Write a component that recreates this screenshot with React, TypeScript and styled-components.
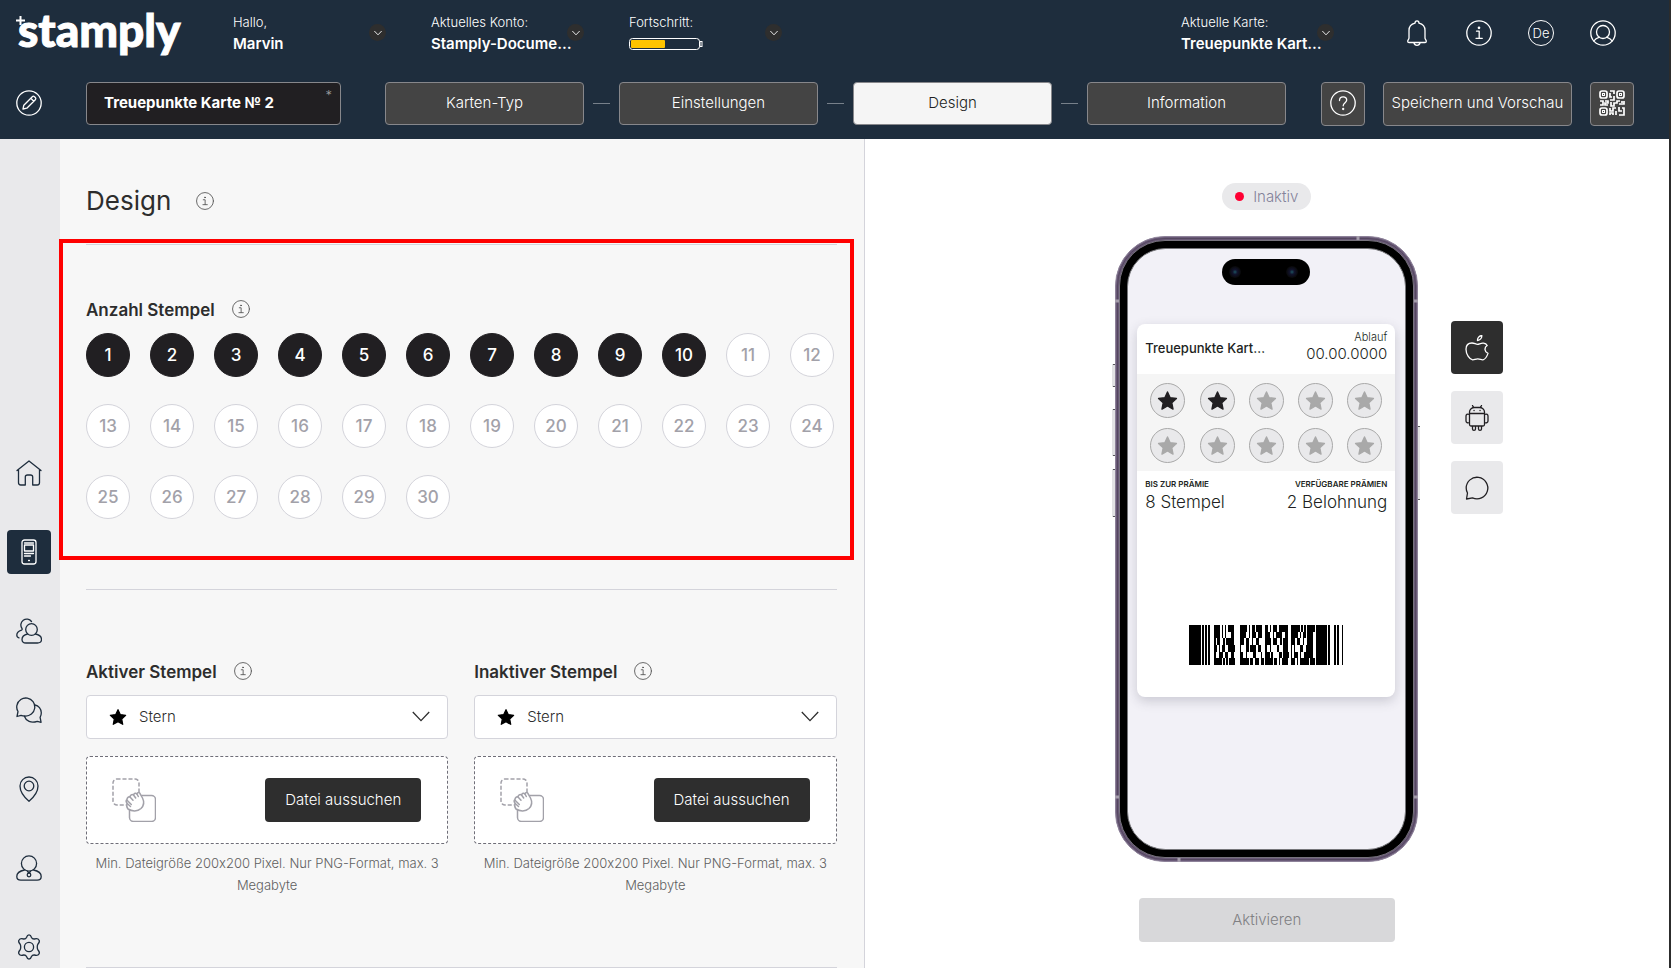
import React from "react";
import styled, { createGlobalStyle, css } from "styled-components";

const color = {
  navy: "#1e2d3d",
  ink: "#211f22",
  text: "#2d2d2d",
  button: "#444444",
  buttonBorder: "#87878b",
  panel: "#f7f7f7",
  rail: "#e9e9eb",
  line: "#d4d4db",
  muted: "#a2a1a9",
};

const GlobalStyle = createGlobalStyle`
  *, *::before, *::after { box-sizing: border-box; }
  body {
    margin: 0;
    background: #ffffff;
    color: ${color.text};
    font-family: Inter, "Liberation Sans", sans-serif;
    font-size: 15px;
    font-weight: 300;
    font-feature-settings: "calt" 0;
  }
  button, input, select { font: inherit; color: inherit; font-feature-settings: inherit; }
  button { padding: 0; border: 0; background: none; cursor: pointer; }
  h1, h2, p { margin: 0; }
  svg { display: block; flex: none; }
`;

const Page = styled.div`
  display: flex;
  flex-direction: column;
  height: 100vh;
  overflow: hidden;
  border-right: 2px solid #2c2c2c;
`;

/* ---------- header ---------- */

const Header = styled.header`
  flex: none;
  background: ${color.navy};
  color: #ffffff;
`;

const TopRow = styled.div`
  display: flex;
  align-items: center;
  height: 66px;
  padding: 0 53px 0 16px;
`;

const Logo = styled.a`
  position: relative;
  width: 217px;
  padding: 0 0 6px 2px;
  color: #ffffff;
  font-family: Lato, sans-serif;
  font-size: 46px;
  font-weight: 900;
  line-height: 60px;
  text-decoration: none;
  -webkit-text-stroke: 1px #ffffff;
`;

const LogoSpark = styled.svg`
  position: absolute;
  left: 0;
  top: 16px;
`;

const Accounts = styled.div`
  display: flex;
  flex: 1;
  gap: 45px;
`;

const AccountButton = styled.button<{ $last?: boolean }>`
  position: relative;
  width: 153px;
  text-align: left;
  line-height: 22px;
  ${(p) => p.$last && css`margin-left: auto;`}
`;

const AccountLabel = styled.span`
  display: block;
  font-size: 13px;
`;

const AccountName = styled.span`
  display: flex;
  align-items: center;
  height: 22px;
  font-size: 15px;
  font-weight: 600;
  white-space: nowrap;
`;

const ChevronDot = styled.span`
  position: absolute;
  right: 0;
  top: 13px;
  display: grid;
  place-items: center;
  width: 17px;
  height: 17px;
  border-radius: 50%;
  background: #2e2e2e;
`;

const Tools = styled.div`
  display: flex;
  gap: 36px;
  margin-left: 70px;
`;

const IconButton = styled.button`
  display: grid;
  place-items: center;
  width: 26px;
  height: 26px;
`;

const Language = styled(IconButton)`
  border: 1px solid #ffffff;
  border-radius: 50%;
  font-size: 13px;
`;

const StepRow = styled.div`
  display: flex;
  align-items: flex-start;
  padding: 16px 35px 13px 16px;
`;

const EditButton = styled(IconButton)`
  margin-top: 8px;
`;

const NameField = styled.label`
  position: relative;
  width: 255px;
  margin: 0 44px;
`;

const NameInput = styled.input`
  display: block;
  width: 100%;
  height: 43px;
  padding: 0 17px 2px;
  border: 1px solid ${color.buttonBorder};
  border-radius: 4px;
  background: ${color.ink};
  font-weight: 700;
`;

const Required = styled.span`
  position: absolute;
  right: 9px;
  top: 5px;
  color: #a0a0a0;
  font-size: 13px;
`;

const Steps = styled.nav`
  display: flex;
  flex: 1;
  align-items: center;
  gap: 9px;
`;

const Separator = styled.span`
  width: 17px;
  height: 1px;
  background: #77808a;
`;

const BarButton = styled.button<{ $active?: boolean; $width?: number }>`
  display: flex;
  align-items: center;
  justify-content: center;
  ${(p) =>
    p.$width
      ? css`width: ${p.$width}px; height: 44px; padding-bottom: 3px;`
      : css`flex: 1; height: 43px; padding-bottom: 2px;`}
  border: 1px solid ${color.buttonBorder};
  border-radius: 4px;
  background: ${(p) => (p.$active ? "#f5f5f5" : color.button)};
  color: ${(p) => (p.$active ? color.ink : "#ffffff")};
  white-space: nowrap;
`;

const BarActions = styled.div`
  display: flex;
  gap: 18px;
  margin-left: 35px;
`;

/* ---------- body ---------- */

const Body = styled.div`
  display: grid;
  flex: 1;
  grid-template-columns: 60px minmax(0, 1fr) minmax(0, 1fr);
  grid-template-rows: minmax(0, 1fr);
  min-height: 0;
`;

const Rail = styled.nav`
  display: flex;
  flex-direction: column;
  gap: 35px;
  padding: 312px 0 0 7px;
  background: ${color.rail};
`;

const RailLink = styled.a<{ $active?: boolean }>`
  display: grid;
  flex: none;
  place-items: center;
  width: 44px;
  height: 44px;
  border-radius: 4px;
  color: ${(p) => (p.$active ? "#ffffff" : color.navy)};
  ${(p) => p.$active && css`background: ${color.navy};`}
`;

const Editor = styled.main`
  position: relative;
  padding: 0 27px 0 26px;
  border-right: 1px solid ${color.line};
  background: ${color.panel};
`;

const TitleRow = styled.div`
  display: flex;
  align-items: center;
  gap: 25px;
  height: 105px;
  padding-top: 18px;
`;

const Title = styled.h1`
  font-size: 26px;
  font-weight: 400;
  line-height: 36px;
`;

const Section = styled.section`
  border-top: 1px solid ${color.line};
`;

const StampSection = styled(Section)`
  height: 345px;
  padding-top: 50px;
`;

const UploadSection = styled(Section)`
  display: grid;
  grid-template-columns: 1fr 1fr;
  gap: 26px;
  height: 378px;
  padding-top: 67px;
`;

const Highlight = styled.div`
  position: absolute;
  left: -1px;
  right: 10px;
  top: 100px;
  height: 321px;
  border: 4px solid #ff0000;
  pointer-events: none;
`;

const HeadingRow = styled.div`
  display: flex;
  align-items: center;
  gap: 17px;
  height: 28px;
`;

const Heading = styled.h2`
  padding-top: 2px;
  font-size: 17px;
  font-weight: 600;
  line-height: 26px;
`;

const InfoButton = styled.button`
  width: 18px;
  height: 18px;
  color: #5a5a5a;
`;

const CountGrid = styled.div`
  display: flex;
  flex-wrap: wrap;
  gap: 27px 20px;
  margin-top: 10px;
`;

const Count = styled.button<{ $on: boolean }>`
  width: 44px;
  height: 44px;
  border: 1px solid ${(p) => (p.$on ? color.ink : color.line)};
  border-radius: 50%;
  background: ${(p) => (p.$on ? color.ink : "#ffffff")};
  color: ${(p) => (p.$on ? "#ffffff" : color.muted)};
  font-size: 17px;
  font-weight: 500;
`;

const SelectBox = styled.div`
  position: relative;
  margin-top: 10px;
`;

const Select = styled.select`
  appearance: none;
  width: 100%;
  height: 44px;
  padding: 0 52px 2px;
  border: 1px solid ${color.line};
  border-radius: 4px;
  background: #ffffff;
`;

const SelectStar = styled.span`
  position: absolute;
  left: 23px;
  top: 13px;
  color: #000000;
  pointer-events: none;
`;

const SelectChevron = styled.span`
  position: absolute;
  right: 18px;
  top: 16px;
  pointer-events: none;
`;

const DropZone = styled.div`
  display: flex;
  align-items: center;
  justify-content: space-between;
  height: 88px;
  margin-top: 17px;
  padding: 0 26px 0 25px;
  border: 1px dashed #6f6e78;
  border-radius: 4px;
  background: #ffffff;
`;

const FileButton = styled.button`
  width: 156px;
  height: 44px;
  padding-bottom: 2px;
  border-radius: 4px;
  background: #2e2e2e;
  color: #ffffff;
`;

const Hint = styled.p`
  margin-top: 8px;
  color: #5f5f5f;
  font-size: 13px;
  line-height: 22px;
  text-align: center;
`;

/* ---------- preview ---------- */

const Preview = styled.aside`
  display: flex;
  flex-direction: column;
  align-items: center;
  padding-top: 44px;
`;

const Status = styled.div`
  display: flex;
  align-items: center;
  gap: 9px;
  height: 27px;
  padding: 0 13px;
  border-radius: 14px;
  background: ${color.rail};
  color: #83829a;
`;

const StatusDot = styled.span`
  width: 9px;
  height: 9px;
  border-radius: 50%;
  background: #ff0033;
`;

const Stage = styled.div`
  display: grid;
  grid-template-columns: 1fr auto 1fr;
  width: 100%;
  margin-top: 26px;
`;

const Phone = styled.div`
  position: relative;
  grid-column: 2;
  width: 303px;
  height: 626px;
  padding: 88px 23px 0 22px;
`;

const PhoneDrawing = styled.svg`
  position: absolute;
  left: -4px;
  top: 0;
`;

const Card = styled.article`
  position: relative;
  display: flex;
  flex-direction: column;
  height: 373px;
  border-radius: 8px;
  background: #ffffff;
  color: ${color.ink};
  box-shadow: 0 4px 12px rgba(60, 60, 80, 0.22);
`;

const CardHead = styled.div`
  display: flex;
  align-items: center;
  justify-content: space-between;
  height: 50px;
  padding: 0 8px 2px;
  font-size: 13px;
  font-weight: 500;
`;

const Expiry = styled.div`
  padding-bottom: 4px;
  font-size: 15px;
  font-weight: 300;
  line-height: 18px;
  text-align: right;
`;

const ExpiryLabel = styled.div`
  font-size: 11px;
  line-height: 16px;
`;

const StampBand = styled.div`
  display: grid;
  grid-template-columns: repeat(5, 35px);
  justify-content: space-between;
  gap: 10px 0;
  height: 97px;
  padding: 9px 13px;
  background: #f5f5f5;
`;

const Stamp = styled.span<{ $on: boolean }>`
  display: grid;
  place-items: center;
  width: 35px;
  height: 35px;
  border: 1px solid #a9a9a9;
  border-radius: 50%;
  background: ${color.rail};
  color: ${(p) => (p.$on ? color.ink : "#a9a9a9")};
`;

const Totals = styled.div`
  display: flex;
  justify-content: space-between;
  padding: 6px 8px;
`;

const Total = styled.div<{ $end?: boolean }>`
  font-size: 17px;
  line-height: 22px;
  text-align: ${(p) => (p.$end ? "right" : "left")};
`;

const TotalLabel = styled.div`
  font-size: 8px;
  font-weight: 600;
  line-height: 14px;
  text-transform: uppercase;
`;

const BarcodeBox = styled.div`
  display: flex;
  justify-content: center;
  margin-top: auto;
  padding-bottom: 32px;
`;

const Platforms = styled.div`
  display: flex;
  flex-direction: column;
  gap: 17px;
  padding: 85px 0 0 33px;
`;

const Platform = styled.button<{ $active?: boolean }>`
  display: grid;
  place-items: center;
  width: 52px;
  height: 53px;
  border-radius: 4px;
  background: ${(p) => (p.$active ? "#2e2e2e" : color.rail)};
  color: ${(p) => (p.$active ? "#ffffff" : color.ink)};
`;

const Activate = styled.button`
  width: 256px;
  height: 44px;
  margin-top: 36px;
  padding-bottom: 2px;
  border-radius: 4px;
  background: #d8d8da;
  color: #808083;
`;

/* ---------- icons ---------- */

type IconProps = { size?: number; stroke?: number; children: React.ReactNode };

const Icon = ({ size = 26, stroke = 1.3, children }: IconProps) => (
  <svg
    width={size}
    height={size}
    viewBox="0 0 26 26"
    fill="none"
    stroke="currentColor"
    strokeWidth={stroke}
    strokeLinecap="round"
    strokeLinejoin="round"
    aria-hidden="true"
  >
    {children}
  </svg>
);

const InfoGlyph = ({ size, stroke }: { size?: number; stroke?: number }) => (
  <Icon size={size} stroke={stroke}>
    <circle cx="13" cy="13" r="12.2" />
    <path d="M10.5 11.2h2.7v7M10 18.3h6.3" />
    <circle cx="13" cy="7.8" r=".7" fill="currentColor" />
  </Icon>
);

const Star = ({ size }: { size: number }) => (
  <svg width={size} height={size} viewBox="0 0 24 24" fill="currentColor" stroke="currentColor" strokeWidth="1.6" strokeLinejoin="round" aria-hidden="true">
    <path d="M12 2.200l3 6.600 7.200.9-5.300 4.900 1.400 7.200-6.300-3.500-6.300 3.500 1.400-7.200L1.800 9.700l7.200-.9z" />
  </svg>
);

const Chevron = ({ width, stroke = 1.3 }: { width: number; stroke?: number }) => (
  <svg width={width} height={width / 2 + 2} viewBox="0 0 18 11" fill="none" stroke="currentColor" strokeWidth={stroke} aria-hidden="true">
    <path d="M.8 1L9 9.600 17.200 1" />
  </svg>
);

const DragIcon = () => (
  <svg width="44" height="44" viewBox="0 0 44 44" fill="none" stroke="#a2a1a9" strokeWidth="1.5" strokeLinejoin="round" strokeLinecap="round" aria-hidden="true">
    <rect x="1" y="1" width="26" height="26" rx="4" strokeDasharray="3 3" />
    <rect x="17.5" y="17.5" width="26" height="26" rx="4" />
    <path
      fill="#ffffff"
      d="M16 31c-1.500-2-1.500-4-.8-5.500-1.500-2-1.500-3-.3-4 .4-2 1.500-3 3-2.500.4-2 2-3 3.500-2 .8-2 2.500-2.300 3.500-1 .8-2 2.800-2 3.200-.2l2.400 4.200c2 4 1 8-1.500 10.500-3.500 3.200-9 3-13 .5z"
    />
    <path d="M14.800 22l4.500 4.500M18 19l3 3.200M21.500 17l2.200 3M25 16l1.300 2.500M15.200 25.500l3.300 3" />
  </svg>
);

/* Finder squares plus the scattered modules of a QR code. */
const QrIcon = () => (
  <svg width="26" height="26" viewBox="0 0 26 26" fill="none" stroke="currentColor" strokeWidth="1.7" aria-hidden="true">
    {[[1, 1], [18, 1], [1, 18]].map(([x, y]) => (
      <g key={`${x}-${y}`}>
        <rect x={x} y={y} width="7" height="7" rx="2" />
        <rect x={x + 2.5} y={y + 2.5} width="2" height="2" strokeWidth="1" />
      </g>
    ))}
    <path d="M11 1h4v3M11 3v4h2M15 6v4h-4M1 11h3v4H1M6 11h3v2H6v2h3M12 12v4h3v-3h3v-2h3M20 14h5v-3M23 11v2M11 18v3h3v-3h3M11 25v-2h3v2M17 21v4M20 25h5v-7h-2M20 17v4h3" />
  </svg>
);

const railItems = [
  {
    label: "Startseite",
    icon: <path d="M1 10.500L13 1l12 9.500M2.500 9.500v13c0 1.500.8 2.500 2.300 2.500h4.500v-8c0-1.300.9-2 2.200-2h3c1.300 0 2.200.7 2.200 2v8h4.500c1.500 0 2.300-1 2.300-2.500v-13" />,
  },
  {
    label: "Karten",
    active: true,
    icon: (
      <>
        <rect x="6" y="1" width="14" height="24" rx="2.5" />
        <rect x="8.5" y="6" width="9" height="6" />
        <path d="M8.500 4h9M8.500 14.500h9M8.500 17h6M12.600 21.500h.8" />
      </>
    ),
  },
  {
    label: "Kunden",
    icon: (
      <>
        <circle cx="15.5" cy="11.5" r="5.800" />
        <path d="M11.500 16c-3 .7-5.500 2-5.500 5.500 0 2.500 1.500 3.500 4 3.500h11.500c2.500 0 4-1 4-3.500 0-3.500-3-5-6-5.500M15.500 3.500A5.800 5.800 0 1 0 6 10.500c.3.700.4 1.200-.5 1.600C2.500 13 .8 14.500.8 17c0 1.500.7 2.500 2.200 2.800" />
      </>
    ),
  },
  {
    label: "Nachrichten",
    icon: (
      <>
        <path d="M1 19.500l1-5C.5 12 .6 9.500 1 8a9 9 0 1 1 8 11c-1.500 0-3-.3-4-.7z" />
        <path d="M19 8c3.500.5 6.300 4 6.300 7.800 0 1.700-.4 3.200-1.200 4.500l1 5-3.800-1C15 26.500 10 24 8.500 19.500" />
      </>
    ),
  },
  {
    label: "Standorte",
    icon: (
      <>
        <path d="M13 25.300C8 21 4 15.500 4 10a9 9 0 0 1 18 0c0 5.500-4 11-9 15.300z" />
        <circle cx="13" cy="10" r="4.800" />
      </>
    ),
  },
  {
    label: "Mitarbeiter",
    icon: (
      <>
        <circle cx="13" cy="8.500" r="7.600" />
        <path d="M8.500 15c-4 .8-7.700 2.500-7.700 6.500 0 2.500 1.500 3.700 4 3.700h16.400c2.500 0 4-1.200 4-3.700 0-4-3.700-5.700-7.700-6.500M11.500 16.500L13 18l1.500-1.500" />
        <circle cx="13" cy="20" r="1.800" />
      </>
    ),
  },
  {
    label: "Optionen",
    icon: (
      <>
        <circle cx="13" cy="13" r="4.600" />
        <path d="M10.500 3.500c.5-1.600 1.300-2.600 2.500-2.600s2 1 2.500 2.600c.6 1.300 1.500 1.600 2.800 1.500 2.200-.6 3.900-.5 4.700 1 .8 1.300.3 2.600-1 4-1 1.300-1 4.700 0 6 1.300 1.400 1.800 2.700 1 4-.8 1.500-2.500 1.600-4.700 1-1.300-.1-2.200.2-2.800 1.500-.5 1.600-1.300 2.600-2.500 2.600s-2-1-2.500-2.600c-.6-1.300-1.500-1.600-2.800-1.500-2.200.6-3.900.5-4.700-1-.8-1.300-.3-2.600 1-4 1-1.300 1-4.700 0-6-1.300-1.400-1.800-2.700-1-4 .8-1.500 2.500-1.600 4.700-1 1.300.1 2.200-.2 2.800-1.500z" />
      </>
    ),
  },
];

/* PDF417 symbol: alternating bar / space widths, six rows of four codewords. */
const barcodeRows = [
  "41111144" + "51112142" + "21113162" + "61111151",
  "41111324" + "42113132" + "32114222" + "51112142",
  "11221154" + "31221224" + "41321132" + "31221242",
  "21112253" + "13214123" + "12141332" + "11132252",
  "12312224" + "22142312" + "31142141" + "11311262",
  "51111143" + "61213121" + "51211142" + "31116131",
].map((row) => "81111113" + row + "711311121");

const barcodePath = barcodeRows
  .map((row, y) => {
    let x = 0;
    return [...row]
      .map((digit, i) => {
        const w = Number(digit);
        const bar = i % 2 === 0 ? `M${x} ${y}h${w}v1h-${w}z` : "";
        x += w;
        return bar;
      })
      .join("");
  })
  .join("");

const Barcode = () => (
  <svg width="154" height="40" viewBox="0 0 103 6" preserveAspectRatio="none" shapeRendering="crispEdges" role="img" aria-label="Barcode">
    <path d={barcodePath} />
  </svg>
);

const PhoneFrame = () => (
  <PhoneDrawing width="311" height="626" viewBox="0 0 311 626" aria-hidden="true">
    <defs>
      <radialGradient id="lens">
        <stop offset="0" stopColor="#1d5360" />
        <stop offset=".4" stopColor="#11132c" />
        <stop offset="1" stopColor="#080808" />
      </radialGradient>
    </defs>
    <g fill="#e2e2e4">
      <rect x="1" y="128" width="4" height="23" />
      <rect x="1" y="173" width="4" height="47" />
      <rect x="1" y="233" width="4" height="48" />
      <rect x="306" y="190" width="3" height="74" />
    </g>
    <path fill="none" stroke="#55555a" d="M2 128.500h2M2 150.500h2M2 173.500h2M2 219.500h2M2 233.500h2M2 280.500h2M307 190.500h2M307 263.500h2" />
    <rect x="4.5" y=".5" width="302" height="625" rx="49.5" fill="#6a5a78" stroke="#8d8299" />
    <rect x="6.5" y="2.5" width="298" height="621" rx="47.5" fill="none" stroke="#54475f" />
    <rect x="8.5" y="4.5" width="294" height="617" rx="45.5" fill="#000000" stroke="#77737d" />
    <path stroke="#a59dac" strokeWidth="3" d="M247 0v4M68 622v4M4 65h4M303 65h4M4 561h4M303 561h4" />
    <rect x="16.5" y="12.5" width="278" height="601" rx="38" fill="#f2f1f7" stroke="#77777b" />
    <rect x="111" y="23" width="88" height="26" rx="13" fill="#000000" />
    <circle cx="124" cy="36" r="6" fill="url(#lens)" />
    <circle cx="181" cy="36" r="6" fill="url(#lens)" />
  </PhoneDrawing>
);

/* ---------- parts ---------- */

const Account = ({ label, children, last }: { label: string; children: React.ReactNode; last?: boolean }) => (
  <AccountButton type="button" $last={last}>
    <AccountLabel>{label}</AccountLabel>
    <AccountName>{children}</AccountName>
    <ChevronDot>
      <Chevron width={8} stroke={2} />
    </ChevronDot>
  </AccountButton>
);

const Battery = () => (
  <svg width="74" height="12" viewBox="0 0 74 12" fill="none" stroke="#ffffff" aria-hidden="true">
    <rect x=".5" y=".5" width="70" height="11" rx="3" />
    <rect x="71" y="3.5" width="2" height="5" />
    <rect x="2" y="2" width="34" height="8" rx="1" fill="#ffc400" stroke="none" />
  </svg>
);

const Info = ({ about }: { about: string }) => (
  <InfoButton type="button" aria-label={`Info: ${about}`}>
    <InfoGlyph size={18} stroke={1.3} />
  </InfoButton>
);

const StampUpload = ({ id, title }: { id: string; title: string }) => (
  <div>
    <HeadingRow>
      <Heading>
        <label htmlFor={id}>{title}</label>
      </Heading>
      <Info about={title} />
    </HeadingRow>
    <SelectBox>
      <Select id={id} defaultValue="Stern">
        <option>Stern</option>
      </Select>
      <SelectStar>
        <Star size={18} />
      </SelectStar>
      <SelectChevron>
        <Chevron width={18} />
      </SelectChevron>
    </SelectBox>
    <DropZone>
      <DragIcon />
      <FileButton type="button">Datei aussuchen</FileButton>
    </DropZone>
    <Hint>Min. Dateigröße 200x200 Pixel. Nur PNG-Format, max. 3 Megabyte</Hint>
  </div>
);

const steps = ["Karten-Typ", "Einstellungen", "Design", "Information"];

export default function App() {
  const [count, setCount] = React.useState(10);

  return (
    <Page>
      <GlobalStyle />
      <Header>
        <TopRow>
          <Logo href="#">
            <LogoSpark width="9" height="9" viewBox="0 0 9 9" stroke="#ffffff" strokeWidth="2" aria-hidden="true">
              <path d="M4.500 0v9M0 4.500h9" />
            </LogoSpark>
            stamply
          </Logo>
          <Accounts>
            <Account label="Hallo,">Marvin</Account>
            <Account label="Aktuelles Konto:">Stamply-Docume…</Account>
            <Account label="Fortschritt:">
              <Battery />
            </Account>
            <Account label="Aktuelle Karte:" last>
              Treuepunkte Kart…
            </Account>
          </Accounts>
          <Tools>
            <IconButton type="button" aria-label="Benachrichtigungen">
              <Icon>
                <path d="M11 3.200C11 1.800 11.800.8 13 .8s2 1 2 2.400c3.600.8 6 3.600 6 7.300v7.500c0 1.400 1.300 1.900 1.300 3.300 0 .8-.5 1.200-1.300 1.200H5c-.8 0-1.300-.4-1.300-1.200 0-1.400 1.300-1.900 1.300-3.300v-7.500c0-3.700 2.400-6.500 6-7.300zM9.800 22.500c.5 1.800 1.700 2.800 3.200 2.800s2.700-1 3.200-2.800" />
              </Icon>
            </IconButton>
            <IconButton type="button" aria-label="Information">
              <InfoGlyph />
            </IconButton>
            <Language type="button">De</Language>
            <IconButton type="button" aria-label="Profil">
              <Icon>
                <circle cx="13" cy="13" r="12.200" />
                <circle cx="13" cy="12" r="6.500" />
                <path d="M3.800 21c1.300-2 3-3 5.700-3.800M22.200 21c-1.300-2-3-3-5.700-3.800" />
              </Icon>
            </IconButton>
          </Tools>
        </TopRow>
        <StepRow>
          <EditButton type="button" aria-label="Bearbeiten">
            <Icon>
              <circle cx="13" cy="13" r="12.200" />
              <path d="M7 19l.8-3.800 8.500-8.500c.7-.7 1.600-.6 2.200 0l.8.8c.6.6.7 1.500 0 2.200l-8.500 8.500zM14.800 8.300l3 3" />
            </Icon>
          </EditButton>
          <NameField>
            <NameInput aria-label="Kartenname" defaultValue="Treuepunkte Karte № 2" />
            <Required>*</Required>
          </NameField>
          <Steps>
            {steps.map((step, i) => (
              <React.Fragment key={step}>
                {i > 0 && <Separator />}
                <BarButton type="button" $active={step === "Design"}>
                  {step}
                </BarButton>
              </React.Fragment>
            ))}
          </Steps>
          <BarActions>
            <BarButton type="button" $width={44} aria-label="Hilfe">
              <Icon>
                <circle cx="13" cy="13" r="12.200" />
                <path d="M9.500 10.500c0-2.300 1.400-3.700 3.600-3.700s3.600 1.300 3.600 3.300c0 2.500-3.500 2.700-3.500 5.700" />
                <circle cx="13.200" cy="19" r=".5" fill="currentColor" />
              </Icon>
            </BarButton>
            <BarButton type="button" $width={189}>
              Speichern und Vorschau
            </BarButton>
            <BarButton type="button" $width={44} aria-label="QR-Code">
              <QrIcon />
            </BarButton>
          </BarActions>
        </StepRow>
      </Header>

      <Body>
        <Rail>
          {railItems.map((item) => (
            <RailLink key={item.label} href="#" aria-label={item.label} $active={item.active}>
              <Icon>{item.icon}</Icon>
            </RailLink>
          ))}
        </Rail>

        <Editor>
          <TitleRow>
            <Title>Design</Title>
            <Info about="Design" />
          </TitleRow>
          <StampSection>
            <HeadingRow>
              <Heading>Anzahl Stempel</Heading>
              <Info about="Anzahl Stempel" />
            </HeadingRow>
            <CountGrid>
              {Array.from({ length: 30 }, (_, i) => i + 1).map((n) => (
                <Count key={n} type="button" $on={n <= count} aria-pressed={n === count} onClick={() => setCount(n)}>
                  {n}
                </Count>
              ))}
            </CountGrid>
          </StampSection>
          <UploadSection>
            <StampUpload id="active-stamp" title="Aktiver Stempel" />
            <StampUpload id="inactive-stamp" title="Inaktiver Stempel" />
          </UploadSection>
          <Section />
          <Highlight />
        </Editor>

        <Preview>
          <Status>
            <StatusDot />
            Inaktiv
          </Status>
          <Stage>
            <Phone>
              <PhoneFrame />
              <Card>
                <CardHead>
                  Treuepunkte Kart…
                  <Expiry>
                    <ExpiryLabel>Ablauf</ExpiryLabel>
                    00.00.0000
                  </Expiry>
                </CardHead>
                <StampBand>
                  {Array.from({ length: 10 }, (_, i) => (
                    <Stamp key={i} $on={i < 2}>
                      <Star size={21} />
                    </Stamp>
                  ))}
                </StampBand>
                <Totals>
                  <Total>
                    <TotalLabel>Bis zur Prämie</TotalLabel>8 Stempel
                  </Total>
                  <Total $end>
                    <TotalLabel>Verfügbare Prämien</TotalLabel>2 Belohnung
                  </Total>
                </Totals>
                <BarcodeBox>
                  <Barcode />
                </BarcodeBox>
              </Card>
            </Phone>
            <Platforms>
              <Platform type="button" $active aria-label="Apple">
                <Icon>
                  <path d="M19.500 8.200c1.600.2 3 1 3.700 2.300-3.300 2-2.800 6.500.8 7.900-.9 2.600-2.700 5.900-5 6.400-1.800.2-2.800-1-5.200-1s-3.400 1.200-5.200 1C5.300 24.300 2 19 2 14.300 2 10.300 4.500 8 8 8c2.300 0 3.700 1.300 5.500 1.300 1.700 0 3.300-1.400 6-1.100zM13.500 5.500c-.2-2.500 1.800-4.800 4.300-5 .2 2.600-1.800 4.900-4.300 5z" />
                </Icon>
              </Platform>
              <Platform type="button" aria-label="Android">
                <Icon>
                  <path d="M5.500 8.500h15v11a1.500 1.500 0 0 1-1.500 1.500H7a1.500 1.500 0 0 1-1.500-1.500zM5.500 8.500V7c0-2.500 2.500-4.500 5-4.500h5c2.500 0 5 2 5 4.500v1.500M8.500.5l1.200 2.200M17.500.5l-1.200 2.200M10 5.500h.1M16 5.500h.1M5.500 9.500C3 8.500 2 9.500 2 11v5c0 1.500 1.500 2.300 3.500 1.500M20.500 9.500c2.500-1 3.500 0 3.500 1.500v5c0 1.500-1.500 2.300-3.500 1.500M8.500 21v3c0 1.700 3 1.700 3 0v-3M14.500 21v3c0 1.700 3 1.700 3 0v-3" />
                </Icon>
              </Platform>
              <Platform type="button" aria-label="Chat">
                <Icon>
                  <path d="M2.500 24l1-6C2.600 16.500 2.200 15 2.200 13a10.800 10.800 0 1 1 6.300 9.900z" />
                </Icon>
              </Platform>
            </Platforms>
          </Stage>
          <Activate type="button">Aktivieren</Activate>
        </Preview>
      </Body>
    </Page>
  );
}
